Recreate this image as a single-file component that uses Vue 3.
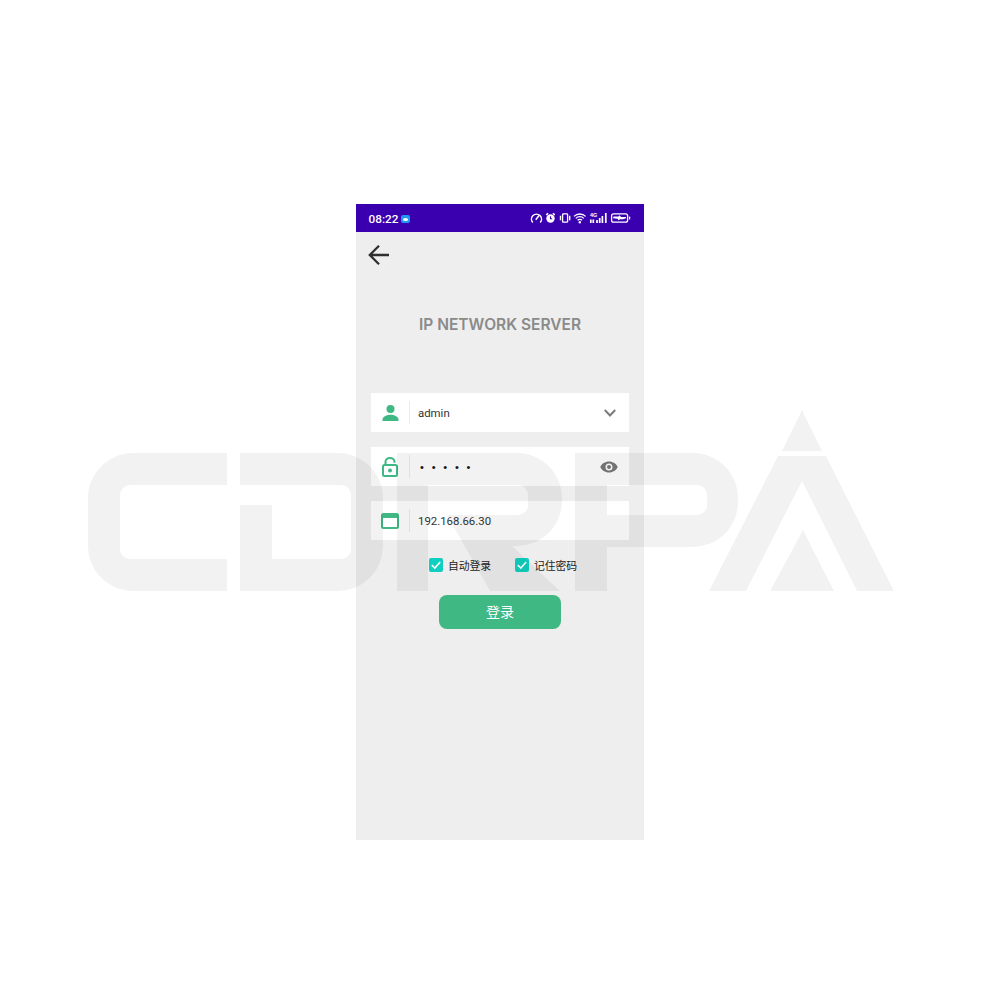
<script setup>
const fields = [
  { key: 'user', text: 'admin', right: 'chevron' },
  { key: 'lock', text: '•••••', right: 'eye' },
  { key: 'host', text: '192.168.66.30' }
]
const checks = ['自动登录', '记住密码']
</script>

<template>
  <div class="page">
    <div class="phone">
      <div class="status">
        <span class="time">08:22</span>
        <svg class="notify" width="9" height="8" viewBox="0 0 9 8">
          <rect width="9" height="8" rx="2" fill="#2196f3" />
          <ellipse cx="4.5" cy="4.5" rx="2.6" ry="1.6" fill="#fff" />
        </svg>
        <svg class="status-icons" width="101" height="14" viewBox="0 0 101 14" fill="none" stroke="#fff">
          <!-- speed -->
          <path d="M2.800 11.500a5 5 0 1 1 7.400 0" stroke-width="1.500" />
          <path d="M5.800 8.800 9 4.500" stroke-width="1.500" />
          <!-- alarm -->
          <circle cx="20.500" cy="7.500" r="4.200" fill="#fff" stroke="none" />
          <path d="M16.300 4 18 2.200M24.700 4 23 2.200" stroke-width="1.600" />
          <path d="M20.500 5.200v2.500h1.600" stroke="#3a00b0" stroke-width="1.100" />
          <!-- vibrate -->
          <rect x="32.600" y="2.800" width="5" height="8.400" rx=".8" stroke-width="1.300" />
          <path d="M30.500 4.800v4.400M39.700 4.800v4.400" stroke-width="1.400" />
          <!-- wifi -->
          <path d="M44 5.400a8.200 8.200 0 0 1 11.600 0M45.800 7.400a5.600 5.600 0 0 1 8 0M47.600 9.300a3 3 0 0 1 4.400 0" stroke-width="1.300" />
          <circle cx="49.800" cy="11.300" r="1.200" fill="#fff" stroke="none" />
          <!-- signal -->
          <text x="60" y="6.300" font-size="5.500" font-weight="700" fill="#fff" stroke="none" font-family="Liberation Sans, sans-serif">4G</text>
          <path d="M60.800 8.500v3.500M63.300 8.500v3.500M67 9v3M69.700 7v5M72.400 5v7M75.800 2v10" stroke-width="1.700" />
          <!-- battery -->
          <rect x="81.600" y="2.800" width="16" height="8.400" rx="2" stroke-width="1.300" />
          <path d="M83.500 5.500h5l1-1.200 1.500 1.800h5v1.200l-3 1h-3l-1.500 1-1-1.500-4.500-.5z" fill="#fff" stroke="none" />
          <rect x="99" y="5.600" width="1.200" height="2.800" fill="#fff" stroke="none" />
        </svg>
      </div>

      <div class="toolbar">
        <svg class="back" width="22" height="22" viewBox="0 0 22 22" fill="none" stroke="#2f2f2f" stroke-width="2.300">
          <path d="M21 11H2.500M11 1.800 1.800 11l9.200 9.200" />
        </svg>
      </div>

      <h1 class="title">IP NETWORK SERVER</h1>

      <div class="form">
        <div v-for="f in fields" :key="f.key" class="field">
          <div class="lead">
            <svg v-if="f.key === 'user'" width="17" height="16" viewBox="0 0 17 16" fill="#40b883">
              <circle cx="8.500" cy="4" r="4" />
              <path d="M.5 16v-1.600C.5 11.500 5 9.700 8.500 9.700s8 1.800 8 4.700V16z" />
            </svg>
            <svg v-else-if="f.key === 'lock'" width="16" height="20" viewBox="0 0 16 20" fill="none" stroke="#40b883" stroke-width="2">
              <path d="M3.500 8V4.800a4.500 3.800 0 0 1 9 0v1" />
              <rect x="1" y="8" width="14" height="11" rx="1.500" />
              <circle cx="8" cy="13.500" r="2" fill="#40b883" stroke="none" />
            </svg>
            <svg v-else width="18" height="16" viewBox="0 0 18 16" fill="none" stroke="#40b883">
              <rect x="1" y="1" width="16" height="14" rx="1.500" stroke-width="2" />
              <path d="M1 3.500h16" stroke-width="3" />
            </svg>
          </div>
          <div class="divider"></div>
          <span class="value" :class="{ dots: f.key === 'lock' }">{{ f.text }}</span>
          <svg v-if="f.right === 'chevron'" class="chev" width="12" height="8" viewBox="0 0 12 8" fill="none" stroke="#7c7c7c" stroke-width="2">
            <path d="M.8 1 6 6.500 11.200 1" />
          </svg>
          <svg v-if="f.right === 'eye'" class="eye" width="18" height="12" viewBox="0 0 18 12">
            <path fill="#7a7a7a" fill-rule="evenodd" d="M9 .5C5 .5 1.700 2.800.3 6c1.400 3.200 4.700 5.500 8.700 5.500s7.300-2.300 8.700-5.500C16.300 2.800 13 .5 9 .5zm0 9a3.500 3.500 0 1 1 0-7 3.500 3.500 0 0 1 0 7zm0-5.500a2 2 0 1 0 0 4 2 2 0 0 0 0-4z" />
          </svg>
        </div>
      </div>

      <div class="checks">
        <label v-for="c in checks" :key="c" class="check">
          <span class="box">
            <svg width="14" height="14" viewBox="0 0 14 14" fill="none" stroke="#fff" stroke-width="1.600">
              <path d="M2.800 7.200 5.800 10l5.400-6" />
            </svg>
          </span>
          {{ c }}
        </label>
      </div>

      <button class="login">登录</button>
    </div>

    <!-- watermark lies over the whole picture -->
    <svg class="watermark" width="1000" height="1000" viewBox="0 0 1000 1000" fill="#000" fill-opacity=".05">
      <path fill-rule="evenodd" d="M133 453H227V485H130a10 10 0 0 0-10 10V549a10 10 0 0 0 10 10H227V591H133A45 45 0 0 1 88 546V498A45 45 0 0 1 133 453Z" />
      <path d="M240 453H338A45 45 0 0 1 383 498V546A45 45 0 0 1 338 591H240V505H272V559H341A10 10 0 0 0 351 549V495A10 10 0 0 0 341 485H240Z" />
      <path fill-rule="evenodd" d="M397 453H517A45 45 0 0 1 562 498V501A45 45 0 0 1 517 546H512L560 591H490L447 515H428V591H397ZM428 485V515H518A10 10 0 0 0 528 505V495A10 10 0 0 0 518 485Z" />
      <path fill-rule="evenodd" d="M575 453H693A45 45 0 0 1 738 498V502A45 45 0 0 1 693 547H607V591H575ZM607 485V515H697A10 10 0 0 0 707 505V495A10 10 0 0 0 697 485Z" />
      <path d="M802 410 822 451H782Z" />
      <path d="M778 456H826L894 591H857L802 481 746 591H709Z" />
      <path d="M803 530 834 591H770Z" />
    </svg>
  </div>
</template>

<style scoped>
.page {
  width: 1000px;
  height: 1000px;
  position: relative;
  overflow: hidden;
  background: #fff;
  padding-top: 204px;
  box-sizing: border-box;
  font-family: "Noto Sans CJK SC", "Noto Sans", sans-serif;
}

.phone {
  width: 288px;
  height: 636px;
  margin: 0 auto;
  background: #eeeeee;
  display: flex;
  flex-direction: column;
}

.status {
  height: 28px;
  background: #3a00b0;
  display: flex;
  align-items: center;
  padding: 0 13px 0 12.500px;
  color: #fff;
  flex-shrink: 0;
}

.time {
  font-family: Roboto, sans-serif;
  font-size: 11.800px;
  font-weight: 500;
  line-height: 28px;
  padding-top: 1px;
}

.notify {
  margin-left: 3px;
  margin-top: 1px;
}

.status-icons {
  margin-left: auto;
}

.toolbar {
  height: 46px;
  display: flex;
  align-items: center;
  padding-left: 12px;
  flex-shrink: 0;
}

.title {
  margin: 34px 0 0;
  height: 26px;
  line-height: 26px;
  text-align: center;
  font-family: Inter, sans-serif;
  font-size: 15.500px;
  font-weight: 600;
  color: #8a8a8a;
}

.form {
  margin: 55px 15px 0;
  display: flex;
  flex-direction: column;
  gap: 15px;
}

.field {
  height: 39px;
  background: #fff;
  display: flex;
  align-items: center;
}

.lead {
  width: 38px;
  display: flex;
  justify-content: center;
  flex-shrink: 0;
}

.divider {
  width: 1px;
  height: 23px;
  background: #ececec;
  flex-shrink: 0;
}

.value {
  margin-left: 8px;
  padding-top: 1px;
  font-family: Roboto, sans-serif;
  font-size: 11.400px;
  color: #333;
  flex: 1;
}

.dots {
  margin-left: 10px;
  padding-top: 0;
  font-family: "Liberation Sans", sans-serif;
  font-size: 11px;
  color: #111;
  letter-spacing: 7.800px;
}

.chev {
  margin-right: 13px;
}

.eye {
  margin-right: 11px;
}

.checks {
  margin-top: 18px;
  padding-left: 6px;
  display: flex;
  justify-content: center;
  gap: 23.800px;
}

.check {
  display: flex;
  align-items: center;
  gap: 5px;
  height: 14px;
  font-size: 10.800px;
  color: #222;
}

.box {
  width: 14px;
  height: 14px;
  border-radius: 2px;
  background: #0fd0c0;
  display: block;
}

.box svg {
  display: block;
}

.login {
  display: block;
  width: 122px;
  height: 34px;
  margin: 23px auto 0;
  border: 0;
  border-radius: 8px;
  background: #40b883;
  color: #fff;
  font-family: inherit;
  font-size: 14px;
  padding: 0 0 2px;
}

.watermark {
  position: absolute;
  left: 0;
  top: 0;
  pointer-events: none;
}
</style>
